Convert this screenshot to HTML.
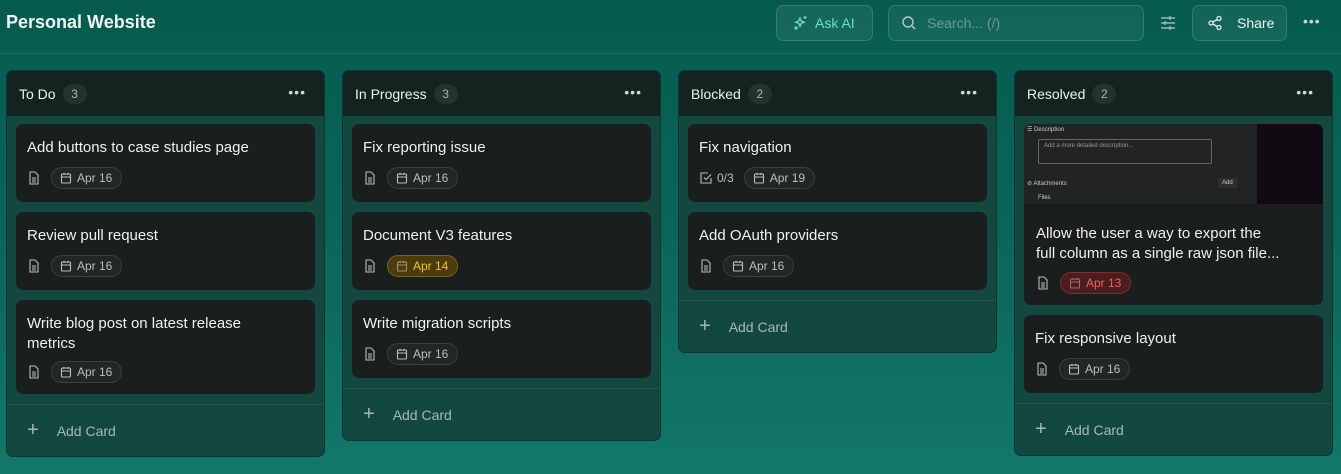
<!DOCTYPE html>
<html><head><meta charset="utf-8"><style>
*{box-sizing:border-box;margin:0;padding:0}
body{width:1341px;height:474px;overflow:hidden;font-family:"Liberation Sans",sans-serif;background:linear-gradient(180deg,#055b4e 0%,#0b6659 50%,#12776a 100%);position:relative;color:#e8ecea}
.topline{position:absolute;left:0;right:0;top:53px;height:1px;background:rgba(255,255,255,0.08)}
.title{position:absolute;left:6px;top:12px;font-size:18px;font-weight:bold;color:#f0f4f2}
.btn{position:absolute;top:5px;height:36px;border:1px solid rgba(255,255,255,0.14);border-radius:7px;background:rgba(255,255,255,0.06);display:flex;align-items:center;font-size:14px}
.col{position:absolute;top:70px;width:319px;background:#124840;border:1px solid rgba(0,0,0,0.25);border-radius:7px;overflow:hidden}
.ch{height:45px;background:#13231f;display:flex;align-items:center;padding-left:12px;font-size:14px;color:#eef2f0;position:relative}
.cnt{margin-left:7px;background:#233330;color:#a9b5b1;font-size:12px;border-radius:10px;width:24px;height:20px;display:flex;align-items:center;justify-content:center}
.dots{position:absolute;right:18px;top:13px;font-size:14px;color:#cfd6d3;letter-spacing:1px}
.cards{padding:8px 9px 0 9px}
.card{background:#1b1e1f;border-radius:7px;margin-bottom:10px;padding:14px 11px 13px 11px}
.ct{font-size:15px;color:#eef1f0;line-height:20px;margin-bottom:9px}
.meta{display:flex;align-items:center;gap:10px;font-size:12px;color:#b8c0bd;height:22px}
.chip{display:flex;align-items:center;gap:5px;height:22px;padding:0 9px 0 8px;border:1px solid #3a3f40;border-radius:11px;background:#222627;color:#b8bfbc}
.chip.y{background:#4a3c0c;border-color:#7a6310;color:#f0c419}
.chip.r{background:#4a1e1e;border-color:#7f2d2d;color:#f06060}
.add{border-top:1px solid rgba(255,255,255,0.07);height:52px;display:flex;align-items:center;padding-left:20px;font-size:14px;color:#a8b8b3}
.add span{font-size:20px;margin-right:18px;font-weight:300}
svg{display:block}
</style></head><body>
<div class="title">Personal Website</div>
<div class="topline"></div>
<div class="btn" style="left:776px;width:97px;padding-left:16px;color:#6ee0c0;background:rgba(255,255,255,0.07)"><svg width="16" height="16" viewBox="0 0 16 16" fill="none" stroke="#6ee0c0" stroke-width="1.3"><path d="M7 3l1.2 3 3 1.2-3 1.2L7 11.4 5.8 8.4 2.8 7.2l3-1.2z"/><path d="M12 1v3M10.5 2.5h3"/><circle cx="3" cy="13" r="1"/></svg><span style="margin-left:6px">Ask AI</span></div>
<div class="btn" style="left:888px;width:256px;padding-left:12px;color:#6f9890;background:rgba(255,255,255,0.06)"><svg width="16" height="16" viewBox="0 0 16 16" fill="none" stroke="#b9c8c4" stroke-width="1.4"><circle cx="7" cy="7" r="5"/><path d="M11 11l3 3"/></svg><span style="margin-left:10px">Search... (/)</span></div>
<svg style="position:absolute;left:1160px;top:15px" width="16" height="16" viewBox="0 0 16 16" stroke="#b9c8c4" stroke-width="1.2"><path d="M1 3h14M1 8h14M1 13h14"/><path d="M10 1v4M5 6v4M10 11v4"/></svg>
<div class="btn" style="left:1192px;width:95px;padding-left:14px;color:#eef"><svg width="16" height="16" viewBox="0 0 16 16" fill="none" stroke="#e6ecea" stroke-width="1.3"><circle cx="12" cy="3.5" r="2"/><circle cx="4" cy="8" r="2"/><circle cx="12" cy="12.5" r="2"/><path d="M5.8 7l4.4-2.5M5.8 9l4.4 2.5"/></svg><span style="margin-left:14px;color:#eef2f0">Share</span></div>
<div style="position:absolute;left:1303px;top:13px;color:#cfd6d3;font-size:14px;letter-spacing:1px">•••</div>

<div class="col" style="left:6px">
 <div class="ch">To Do<div class="cnt">3</div><div class="dots">•••</div></div>
 <div class="cards">
  <div class="card"><div class="ct">Add buttons to case studies page</div><div class="meta"><svg width="14" height="14" viewBox="0 0 14 14" fill="none" stroke="#b8c0bd" stroke-width="1.1"><path d="M3 1h5l3 3v9H3z"/><path d="M5 7h4M5 9h4M5 11h4"/></svg><div class="chip"><svg width="12" height="12" viewBox="0 0 12 12" fill="none" stroke="currentColor" stroke-width="1.1"><rect x="1.5" y="2" width="9" height="9" rx="1"/><path d="M1.5 5h9M4 1v2M8 1v2"/></svg>Apr 16</div></div></div>
  <div class="card"><div class="ct">Review pull request</div><div class="meta"><svg width="14" height="14" viewBox="0 0 14 14" fill="none" stroke="#b8c0bd" stroke-width="1.1"><path d="M3 1h5l3 3v9H3z"/><path d="M5 7h4M5 9h4M5 11h4"/></svg><div class="chip"><svg width="12" height="12" viewBox="0 0 12 12" fill="none" stroke="currentColor" stroke-width="1.1"><rect x="1.5" y="2" width="9" height="9" rx="1"/><path d="M1.5 5h9M4 1v2M8 1v2"/></svg>Apr 16</div></div></div>
  <div class="card" style="padding-bottom:11px"><div class="ct" style="max-width:240px;margin-bottom:7px">Write blog post on latest release metrics</div><div class="meta"><svg width="14" height="14" viewBox="0 0 14 14" fill="none" stroke="#b8c0bd" stroke-width="1.1"><path d="M3 1h5l3 3v9H3z"/><path d="M5 7h4M5 9h4M5 11h4"/></svg><div class="chip"><svg width="12" height="12" viewBox="0 0 12 12" fill="none" stroke="currentColor" stroke-width="1.1"><rect x="1.5" y="2" width="9" height="9" rx="1"/><path d="M1.5 5h9M4 1v2M8 1v2"/></svg>Apr 16</div></div></div>
 </div>
 <div class="add"><span>+</span>Add Card</div>
</div>

<div class="col" style="left:342px">
 <div class="ch">In Progress<div class="cnt">3</div><div class="dots">•••</div></div>
 <div class="cards">
  <div class="card"><div class="ct">Fix reporting issue</div><div class="meta"><svg width="14" height="14" viewBox="0 0 14 14" fill="none" stroke="#b8c0bd" stroke-width="1.1"><path d="M3 1h5l3 3v9H3z"/><path d="M5 7h4M5 9h4M5 11h4"/></svg><div class="chip"><svg width="12" height="12" viewBox="0 0 12 12" fill="none" stroke="currentColor" stroke-width="1.1"><rect x="1.5" y="2" width="9" height="9" rx="1"/><path d="M1.5 5h9M4 1v2M8 1v2"/></svg>Apr 16</div></div></div>
  <div class="card"><div class="ct">Document V3 features</div><div class="meta"><svg width="14" height="14" viewBox="0 0 14 14" fill="none" stroke="#b8c0bd" stroke-width="1.1"><path d="M3 1h5l3 3v9H3z"/><path d="M5 7h4M5 9h4M5 11h4"/></svg><div class="chip y"><svg width="12" height="12" viewBox="0 0 12 12" fill="none" stroke="#a89060" stroke-width="1.1"><rect x="1.5" y="2" width="9" height="9" rx="1"/><path d="M1.5 5h9M4 1v2M8 1v2"/></svg>Apr 14</div></div></div>
  <div class="card"><div class="ct">Write migration scripts</div><div class="meta"><svg width="14" height="14" viewBox="0 0 14 14" fill="none" stroke="#b8c0bd" stroke-width="1.1"><path d="M3 1h5l3 3v9H3z"/><path d="M5 7h4M5 9h4M5 11h4"/></svg><div class="chip"><svg width="12" height="12" viewBox="0 0 12 12" fill="none" stroke="currentColor" stroke-width="1.1"><rect x="1.5" y="2" width="9" height="9" rx="1"/><path d="M1.5 5h9M4 1v2M8 1v2"/></svg>Apr 16</div></div></div>
 </div>
 <div class="add"><span>+</span>Add Card</div>
</div>

<div class="col" style="left:678px">
 <div class="ch">Blocked<div class="cnt">2</div><div class="dots">•••</div></div>
 <div class="cards">
  <div class="card"><div class="ct">Fix navigation</div><div class="meta"><svg width="14" height="14" viewBox="0 0 14 14" fill="none" stroke="#b8c0bd" stroke-width="1.1"><path d="M12 7v5H2V2h7"/><path d="M5 6.5l2 2 5-5"/></svg><span style="margin-left:-6px">0/3</span><div class="chip"><svg width="12" height="12" viewBox="0 0 12 12" fill="none" stroke="currentColor" stroke-width="1.1"><rect x="1.5" y="2" width="9" height="9" rx="1"/><path d="M1.5 5h9M4 1v2M8 1v2"/></svg>Apr 19</div></div></div>
  <div class="card"><div class="ct">Add OAuth providers</div><div class="meta"><svg width="14" height="14" viewBox="0 0 14 14" fill="none" stroke="#b8c0bd" stroke-width="1.1"><path d="M3 1h5l3 3v9H3z"/><path d="M5 7h4M5 9h4M5 11h4"/></svg><div class="chip"><svg width="12" height="12" viewBox="0 0 12 12" fill="none" stroke="currentColor" stroke-width="1.1"><rect x="1.5" y="2" width="9" height="9" rx="1"/><path d="M1.5 5h9M4 1v2M8 1v2"/></svg>Apr 16</div></div></div>
 </div>
 <div class="add"><span>+</span>Add Card</div>
</div>

<div class="col" style="left:1014px">
 <div class="ch">Resolved<div class="cnt">2</div><div class="dots">•••</div></div>
 <div class="cards">
  <div class="card" style="padding:0;overflow:hidden">
   <div style="height:80px;display:flex;position:relative;font-size:6px;color:#ccc">
    <div style="flex:0 0 233px;background:#222324;position:relative">
     <div style="position:absolute;left:3px;top:2px">☰ Description</div>
     <div style="position:absolute;left:14px;top:15px;width:174px;height:25px;border:1px solid #666;border-radius:2px;padding:3px 5px;color:#999">Add a more detailed description...</div>
     <div style="position:absolute;left:3px;top:56px">⊘ Attachments</div>
     <div style="position:absolute;left:194px;top:54px;background:#2d2e30;padding:2px 4px">Add</div>
     <div style="position:absolute;left:14px;top:71px">Files</div>
    </div>
    <div style="flex:1;background:#120a12"></div>
   </div>
   <div style="padding:20px 12px 11px 12px"><div class="ct" style="white-space:nowrap;margin-bottom:8px">Allow the user a way to export the<br>full column as a single raw json file...</div><div class="meta"><svg width="14" height="14" viewBox="0 0 14 14" fill="none" stroke="#b8c0bd" stroke-width="1.1"><path d="M3 1h5l3 3v9H3z"/><path d="M5 7h4M5 9h4M5 11h4"/></svg><div class="chip r"><svg width="12" height="12" viewBox="0 0 12 12" fill="none" stroke="#b06060" stroke-width="1.1"><rect x="1.5" y="2" width="9" height="9" rx="1"/><path d="M1.5 5h9M4 1v2M8 1v2"/></svg>Apr 13</div></div></div>
  </div>
  <div class="card"><div class="ct">Fix responsive layout</div><div class="meta"><svg width="14" height="14" viewBox="0 0 14 14" fill="none" stroke="#b8c0bd" stroke-width="1.1"><path d="M3 1h5l3 3v9H3z"/><path d="M5 7h4M5 9h4M5 11h4"/></svg><div class="chip"><svg width="12" height="12" viewBox="0 0 12 12" fill="none" stroke="currentColor" stroke-width="1.1"><rect x="1.5" y="2" width="9" height="9" rx="1"/><path d="M1.5 5h9M4 1v2M8 1v2"/></svg>Apr 16</div></div></div>
 </div>
 <div class="add"><span>+</span>Add Card</div>
</div>
</body></html>
